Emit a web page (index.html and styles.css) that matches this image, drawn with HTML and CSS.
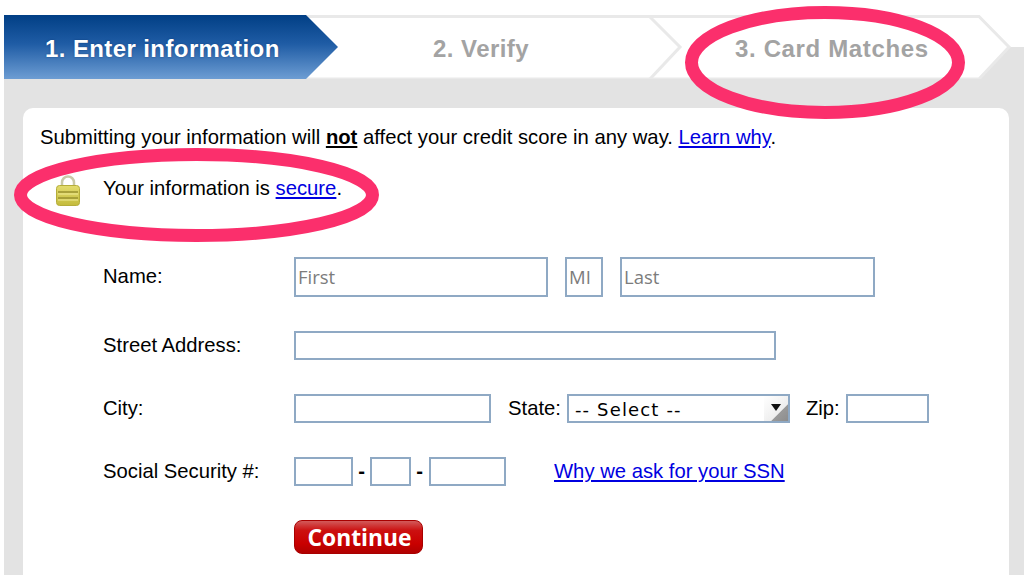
FILE: index.html
```html
<!DOCTYPE html>
<html lang="en">
  <head>
    <title>Enter information</title>
    <link rel="stylesheet" href="styles.css">
  </head>
  <body>
    <div class="page">
      <div class="steps">
        <svg class="steps-bg" width="1020" height="64" viewBox="0 0 1020 64">
          <defs>
            <linearGradient id="active-step" x1="0" y1="0" x2="0" y2="1">
              <stop offset="0" stop-color="#013f85"/>
              <stop offset="0.45" stop-color="#1f5ca5"/>
              <stop offset="1" stop-color="#6d9dd3"/>
            </linearGradient>
          </defs>
          <rect x="960" y="32" width="60" height="32" fill="#e3e3e3"/>
          <path d="M300 1.5H975L1005 32L975 64H300Z" fill="#fff" stroke="#e9e9e9" stroke-width="3"/>
          <path d="M646 2L676 32L646 64" fill="none" stroke="#e9e9e9" stroke-width="3"/>
          <path d="M0 0H302L334 32L302 64H0Z" fill="url(#active-step)"/>
        </svg>
        <div class="step step-one">1. Enter information</div>
        <div class="step step-two">2. Verify</div>
        <div class="step step-three">3. Card Matches</div>
      </div>

      <div class="panel">
        <div class="card">
          <p class="intro">Submitting your information will <strong>not</strong> affect your credit score in any way. <a href="#">Learn why</a>.</p>

          <div class="secure">
            <svg class="lock" width="24" height="31" viewBox="0 0 24 31">
              <defs>
                <linearGradient id="lock-body" x1="0" y1="0" x2="0" y2="1">
                  <stop offset="0" stop-color="#e3dc6e"/>
                  <stop offset="1" stop-color="#c4bb3c"/>
                </linearGradient>
              </defs>
              <path d="M6 12V7.5a6 6 0 0 1 12 0V12" fill="none" stroke="#c9c9a8" stroke-width="2.5"/>
              <rect x="0.5" y="10.5" width="23" height="20" rx="3" fill="url(#lock-body)" stroke="#b5ad3a"/>
              <path d="M2 17H22M2 23H22" stroke="#9a9330" stroke-width="1.6"/>
              <path d="M2 19H22M2 25H22" stroke="#f0ea94" stroke-width="1.2"/>
            </svg>
            <span class="secure-text">Your information is <a href="#">secure</a>.</span>
          </div>

          <form class="form">
            <div class="row row-name">
              <label class="label">Name:</label>
              <div class="fields">
                <input class="input w-first" type="text" placeholder="First">
                <input class="input w-mi" type="text" placeholder="MI">
                <input class="input w-last" type="text" placeholder="Last">
              </div>
            </div>

            <div class="row">
              <label class="label">Street Address:</label>
              <div class="fields">
                <input class="input w-street" type="text">
              </div>
            </div>

            <div class="row">
              <label class="label">City:</label>
              <div class="fields">
                <input class="input w-city" type="text">
                <label>State:</label>
                <div class="select-wrap">
                  <select class="select">
                    <option>-- Select --</option>
                  </select>
                  <span class="select-arrow"></span>
                </div>
                <label class="zip-label">Zip:</label>
                <input class="input w-zip" type="text">
              </div>
            </div>

            <div class="row">
              <label class="label">Social Security #:</label>
              <div class="fields">
                <input class="input w-ssn1" type="text">
                <span class="dash">-</span>
                <input class="input w-ssn2" type="text">
                <span class="dash">-</span>
                <input class="input w-ssn3" type="text">
                <a class="why" href="#">Why we ask for your SSN</a>
              </div>
            </div>

            <div class="row">
              <span></span>
              <div class="fields">
                <button class="continue" type="button">Continue</button>
              </div>
            </div>
          </form>
        </div>
      </div>

      <svg class="marks" width="1024" height="575" viewBox="0 0 1024 575">
        <ellipse cx="825" cy="62.5" rx="133.5" ry="50" fill="none" stroke="#fb2f6c" stroke-width="13"/>
        <ellipse cx="196.5" cy="195" rx="176" ry="40.5" fill="none" stroke="#fb2f6c" stroke-width="13"/>
      </svg>
    </div>
  </body>
</html>
```

FILE: styles.css
```css
* {
  margin: 0;
  padding: 0;
  box-sizing: border-box;
}

body {
  background: #fff;
  font-family: "Liberation Sans", Arial, sans-serif;
  font-size: 20.25px;
  color: #000;
}

a {
  color: #0000e0;
}

.page {
  position: relative;
  width: 1024px;
  height: 575px;
  padding: 15px 0 0 4px;
  overflow: hidden;
}

.steps {
  position: relative;
  display: flex;
  height: 64px;
}

.steps-bg {
  position: absolute;
  top: 0;
  left: 0;
}

.step {
  position: relative;
  display: flex;
  align-items: center;
  height: 68px;
  font-size: 24px;
  font-weight: bold;
  letter-spacing: 0.45px;
  color: #a3a3a3;
}

.step-one {
  width: 334px;
  padding-left: 41px;
  letter-spacing: 0.4px;
  color: #fff;
  text-shadow: 0 0 2px rgba(0,40,100,0.6);
}

.step-two {
  width: 342px;
  padding-left: 95px;
}

.step-three {
  width: 344px;
  padding-left: 55px;
  letter-spacing: 0.65px;
}

.panel {
  height: 496px;
  padding: 29px 15px 0 19px;
  background: #e3e3e3;
}

.card {
  height: 467px;
  padding: 18px 17px 0;
  background: #fff;
  border-radius: 10px 10px 0 0;
}

.intro {
  line-height: 22px;
}

.intro strong {
  text-decoration: underline;
}

.secure {
  display: flex;
  align-items: flex-start;
  gap: 23px;
  margin: 27px 0 0 16px;
}

.secure-text {
  margin-top: 2px;
  line-height: 22px;
}

.form {
  display: flex;
  flex-direction: column;
  gap: 34px;
  margin: 51px 0 0 63px;
}

.row {
  display: grid;
  grid-template-columns: 191px 1fr;
  align-items: center;
}

.label {
  margin-top: -1px;
}

.fields {
  display: flex;
  align-items: center;
}

.input,
.select {
  height: 29px;
  border: 2px solid #8fa9c4;
  background: #fff;
  font-family: "Open Sans", sans-serif;
  font-size: 18.5px;
  padding: 0 2px 2px;
  outline: none;
}

.input::placeholder {
  color: #7c7c7c;
  opacity: 1;
}

.row-name .input {
  height: 40px;
}

.w-first {
  width: 254px;
  margin-right: 17px;
}

.w-mi {
  width: 38px;
  margin-right: 17px;
}

.w-last {
  width: 255px;
}

.w-street {
  width: 482px;
}

.w-city {
  width: 197px;
  margin-right: 17px;
}

.w-zip {
  width: 83px;
  margin-left: 6px;
}

.w-ssn1 {
  width: 59px;
}

.w-ssn2 {
  width: 41px;
}

.w-ssn3 {
  width: 77px;
  margin-left: 1px;
}

.dash {
  width: 17px;
  text-align: center;
  font-weight: bold;
}

.w-ssn3 + .why {
  margin-left: 48px;
}

.select-wrap {
  position: relative;
  width: 223px;
  margin-left: 6px;
}

.select {
  width: 100%;
  appearance: none;
  padding: 1px 0 0 6px;
  font-family: "DejaVu Sans", sans-serif;
  font-size: 18px;
  letter-spacing: 1.15px;
  color: #000;
}

.select-arrow {
  position: absolute;
  top: 2px;
  right: 2px;
  width: 24px;
  height: 25px;
  background: linear-gradient(135deg, #fff 0%, #eee 65%, #9a9a9a 66%, #8d8d8d 100%);
}

.select-arrow::after {
  content: "";
  position: absolute;
  top: 8px;
  left: 7px;
  border-left: 5px solid transparent;
  border-right: 5px solid transparent;
  border-top: 7px solid #111;
}

.zip-label {
  margin-left: 16px;
}

.continue {
  width: 129px;
  height: 34px;
  padding-left: 2px;
  border: 1px solid #a80000;
  border-radius: 8px;
  background: linear-gradient(#d25a5a 0%, #cc1010 30%, #c90000 70%, #b00000 100%);
  color: #fff;
  font-family: "Open Sans", sans-serif;
  font-size: 22.8px;
  font-weight: 700;
}

.marks {
  position: absolute;
  top: 0;
  left: 0;
  pointer-events: none;
}
```
